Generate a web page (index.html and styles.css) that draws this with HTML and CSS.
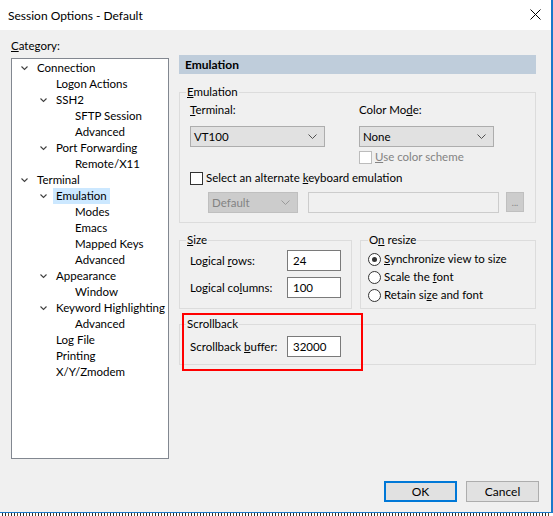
FILE: index.html
```html
<!DOCTYPE html>
<html lang="en">
<head>
  <meta charset="UTF-8" />
  <title>Session Options - Default</title>
  <link rel="stylesheet" href="styles.css">
</head>
<body>
  <div class="dialog">
    <div class="titlebar">
      <span class="title">Session Options - Default</span>
      <svg class="close" width="11" height="11" viewBox="0 0 11 11"><path d="M0.5 0.5L10.5 10.5M10.5 0.5L0.5 10.5" stroke="#000" stroke-width="1"/></svg>
    </div>

    <div class="content">
      <div class="category">
        <div class="label"><u>C</u>ategory:</div>
        <ul class="tree">
          <li class="lvl0"><i class="twisty"><svg width="7" height="5" viewBox="0 0 7 5"><polyline points="0.5,0.5 3.5,3.5 6.5,0.5"/></svg></i><span>Connection</span></li>
          <li class="lvl1"><i class="twisty"></i><span>Logon Actions</span></li>
          <li class="lvl1"><i class="twisty"><svg width="7" height="5" viewBox="0 0 7 5"><polyline points="0.5,0.5 3.5,3.5 6.5,0.5"/></svg></i><span>SSH2</span></li>
          <li class="lvl2"><i class="twisty"></i><span>SFTP Session</span></li>
          <li class="lvl2"><i class="twisty"></i><span>Advanced</span></li>
          <li class="lvl1"><i class="twisty"><svg width="7" height="5" viewBox="0 0 7 5"><polyline points="0.5,0.5 3.5,3.5 6.5,0.5"/></svg></i><span>Port Forwarding</span></li>
          <li class="lvl2"><i class="twisty"></i><span>Remote/X11</span></li>
          <li class="lvl0"><i class="twisty"><svg width="7" height="5" viewBox="0 0 7 5"><polyline points="0.5,0.5 3.5,3.5 6.5,0.5"/></svg></i><span>Terminal</span></li>
          <li class="lvl1"><i class="twisty"><svg width="7" height="5" viewBox="0 0 7 5"><polyline points="0.5,0.5 3.5,3.5 6.5,0.5"/></svg></i><span class="selected">Emulation</span></li>
          <li class="lvl2"><i class="twisty"></i><span>Modes</span></li>
          <li class="lvl2"><i class="twisty"></i><span>Emacs</span></li>
          <li class="lvl2"><i class="twisty"></i><span>Mapped Keys</span></li>
          <li class="lvl2"><i class="twisty"></i><span>Advanced</span></li>
          <li class="lvl1"><i class="twisty"><svg width="7" height="5" viewBox="0 0 7 5"><polyline points="0.5,0.5 3.5,3.5 6.5,0.5"/></svg></i><span>Appearance</span></li>
          <li class="lvl2"><i class="twisty"></i><span>Window</span></li>
          <li class="lvl1"><i class="twisty"><svg width="7" height="5" viewBox="0 0 7 5"><polyline points="0.5,0.5 3.5,3.5 6.5,0.5"/></svg></i><span>Keyword Highlighting</span></li>
          <li class="lvl2"><i class="twisty"></i><span>Advanced</span></li>
          <li class="lvl1"><i class="twisty"></i><span>Log File</span></li>
          <li class="lvl1"><i class="twisty"></i><span>Printing</span></li>
          <li class="lvl1"><i class="twisty"></i><span>X/Y/Zmodem</span></li>
        </ul>
      </div>

      <div class="panel">
        <div class="panel-head">Emulation</div>

        <!-- Emulation group -->
        <div class="group emu">
          <div class="group-title"><u>E</u>mulation</div>
          <div class="emu-grid">
            <div class="field-label"><u>T</u>erminal:</div>
            <div class="field-label">Color Mo<u>d</u>e:</div>
            <div class="select">
              <span>VT100</span>
              <svg width="9" height="5" viewBox="0 0 9 5"><polyline points="0.5,0.5 4.5,4.5 8.5,0.5"/></svg>
            </div>
            <div class="select">
              <span>None</span>
              <svg width="9" height="5" viewBox="0 0 9 5"><polyline points="0.5,0.5 4.5,4.5 8.5,0.5"/></svg>
            </div>
            <div></div>
            <div class="check disabled"><i class="box"></i><span><u>U</u>se color scheme</span></div>
          </div>
          <div class="check alt"><i class="box"></i><span>Select an alternate <u>k</u>eyboard emulation</span></div>
          <div class="alt-row">
            <div class="select disabled">
              <span>Default</span>
              <svg width="9" height="5" viewBox="0 0 9 5"><polyline points="0.5,0.5 4.5,4.5 8.5,0.5"/></svg>
            </div>
            <div class="input disabled"></div>
            <div class="dots">...</div>
          </div>
        </div>

        <div class="pair">
          <div class="group size">
            <div class="group-title"><u>S</u>ize</div>
            <div class="form-row"><span class="row-label">Logical <u>r</u>ows:</span><div class="input">24</div></div>
            <div class="form-row"><span class="row-label">Logical co<u>l</u>umns:</span><div class="input">100</div></div>
          </div>
          <div class="group resize">
            <div class="group-title">O<u>n</u> resize</div>
            <div class="radio first on"><i class="dot"></i><span><u>S</u>ynchronize view to size</span></div>
            <div class="radio"><i class="dot"></i><span>Scale the <u>f</u>ont</span></div>
            <div class="radio"><i class="dot"></i><span>Retain si<u>z</u>e and font</span></div>
          </div>
        </div>

        <div class="group scroll">
          <div class="group-title">Scrollback</div>
          <div class="form-row"><span class="row-label">Scrollback <u>b</u>uffer:</span><div class="input">32000</div></div>
        </div>

        <!-- annotation -->
        <div class="mark"></div>
      </div>
    </div>

    <div class="footer">
      <button class="btn default">OK</button>
      <button class="btn">Cancel</button>
    </div>
  </div>
  <div class="behind"></div>
</body>
</html>
```

FILE: styles.css
```css
body {
  margin: 0;
  width: 553px;
  height: 516px;
  overflow: hidden;
  background: #fff;
  font-family: Lato, "Noto Sans", sans-serif;
  font-size: 11.5px;
  color: #000;
}
u {
  text-underline-offset: 1px;
}
.dialog {
  width: 553px;
  height: 513px;
  box-sizing: border-box;
  border-right: 2px solid #1979ca;
  border-bottom: 1px solid #1979ca;
  background: #f0f0f0;
  display: flex;
  flex-direction: column;
}
.titlebar {
  height: 30px;
  flex: none;
  background: #fff;
  display: flex;
  align-items: center;
  justify-content: space-between;
  padding: 0 10px 0 8px;
}
.title {
  font-size: 12px;
}
.close {
  margin-bottom: 1px;
}
.content {
  display: flex;
  gap: 10px;
  padding: 8px 0 0 11px;
}
.category {
  width: 158px;
}
.label {
  line-height: 16px;
  margin-bottom: 4px;
}
.tree {
  list-style: none;
  margin: 0;
  padding: 1px 0 0;
  height: 401px;
  box-sizing: border-box;
  border: 1px solid #828790;
  background: #fff;
}
.tree li {
  display: flex;
  align-items: center;
  height: 16px;
  line-height: 16px;
  white-space: nowrap;
}
.tree .lvl0 { padding-left: 3px; }
.tree .lvl1 { padding-left: 22px; }
.tree .lvl2 { padding-left: 41px; }
.twisty {
  flex: none;
  width: 19px;
  height: 16px;
  display: flex;
  align-items: center;
}
.twisty svg {
  margin-left: 6px;
  fill: none;
  stroke: #404040;
  stroke-width: 1.1;
}
.tree span {
  padding: 0 3px;
}
.tree .selected {
  background: #cce8ff;
}
.panel {
  position: relative;
  width: 357px;
  margin-top: 17px;
}
.panel-head {
  height: 19px;
  line-height: 19px;
  padding-left: 6px;
  background: #bfcddb;
  font-weight: bold;
  font-size: 12px;
}
.group {
  border: 1px solid #dcdcdc;
  padding: 0 10px;
}
.group-title {
  width: fit-content;
  line-height: 16px;
  margin: -9px 0 0 -4px;
  padding: 0 1px;
  background: #f0f0f0;
}
.emu {
  margin-top: 18px;
  padding-bottom: 9px;
}
.emu-grid {
  display: grid;
  grid-template-columns: 169px 135px;
  margin-top: 2px;
}
.field-label {
  line-height: 16px;
  margin-bottom: 8px;
}
.select {
  width: 135px;
  height: 21px;
  box-sizing: border-box;
  border: 1px solid #adadad;
  background: #e1e1e1;
  display: flex;
  align-items: center;
  justify-content: space-between;
  padding: 0 7px 0 3px;
}
.select svg {
  fill: none;
  stroke: #505050;
  stroke-width: 1;
}
.select.disabled {
  width: 90px;
  border-color: #bfbfbf;
  background: #cccccc;
  color: #838383;
}
.select.disabled svg {
  stroke: #9a9a9a;
}
.check, .radio {
  display: flex;
  align-items: center;
  height: 16px;
  line-height: 16px;
  white-space: nowrap;
}
.check .box {
  flex: none;
  width: 13px;
  height: 13px;
  box-sizing: border-box;
  border: 1px solid #333;
  background: #fff;
  margin-right: 3px;
}
.check.disabled {
  margin-top: 2px;
  color: #838383;
}
.check.disabled .box {
  border-color: #bcbcbc;
}
.alt {
  margin-top: 5px;
}
.alt-row {
  display: flex;
  margin: 6px 0 0 18px;
}
.input {
  width: 54px;
  height: 21px;
  box-sizing: border-box;
  border: 1px solid #7a7a7a;
  background: #fff;
  line-height: 19px;
  padding-left: 5px;
}
.input.disabled {
  width: 191px;
  margin-left: 10px;
  border-color: #cccccc;
  background: #f0f0f0;
}
.dots {
  width: 18px;
  height: 20px;
  box-sizing: border-box;
  margin-left: 7px;
  border: 1px solid #bfbfbf;
  background: #cccccc;
  color: #838383;
  font-size: 9px;
  line-height: 20px;
  text-align: center;
}
.pair {
  display: grid;
  grid-template-columns: 173px 176px;
  gap: 8px;
  margin-top: 17px;
}
.size {
  padding-bottom: 9px;
}
.form-row {
  display: flex;
  align-items: center;
  margin-top: 2px;
}
.form-row + .form-row {
  margin-top: 6px;
}
.row-label {
  width: 97px;
  white-space: nowrap;
}
.resize {
  padding: 0 7px 4px;
}
.resize .group-title {
  margin-left: 0;
}
.radio {
  height: 18px;
}
.radio.first {
  margin-top: 2px;
}
.radio .dot {
  flex: none;
  width: 13px;
  height: 13px;
  box-sizing: border-box;
  border: 1px solid #333;
  border-radius: 50%;
  background: #fff;
  margin-right: 3px;
  display: flex;
  align-items: center;
  justify-content: center;
}
.radio.on .dot::after {
  content: "";
  width: 5px;
  height: 5px;
  border-radius: 50%;
  background: #333;
}
.scroll {
  margin-top: 15px;
  padding-bottom: 7px;
}
.scroll .form-row {
  margin-top: 4px;
}
.mark {
  position: absolute;
  left: 3px;
  top: 258px;
  width: 181px;
  height: 58px;
  box-sizing: border-box;
  border: 2px solid #f00;
}
.footer {
  display: flex;
  justify-content: flex-end;
  gap: 9px;
  padding-right: 12px;
  margin-top: 22px;
}
.btn {
  width: 73px;
  height: 21px;
  box-sizing: border-box;
  border: 1px solid #adadad;
  background: #e1e1e1;
  font: inherit;
  font-size: 12px;
  color: #000;
  padding: 0;
}
.btn.default {
  border: 2px solid #0078d7;
}
/* bits of the terminal text behind the dialog */
.behind {
  height: 3px;
  margin: 0 2px;
  background: repeating-linear-gradient(90deg, #2b2b2b 0 1px, transparent 1px 3px, #2b2b2b 3px 4px, transparent 4px 6px, #6a4a2a 6px 7px, transparent 7px 9px);
}
```
